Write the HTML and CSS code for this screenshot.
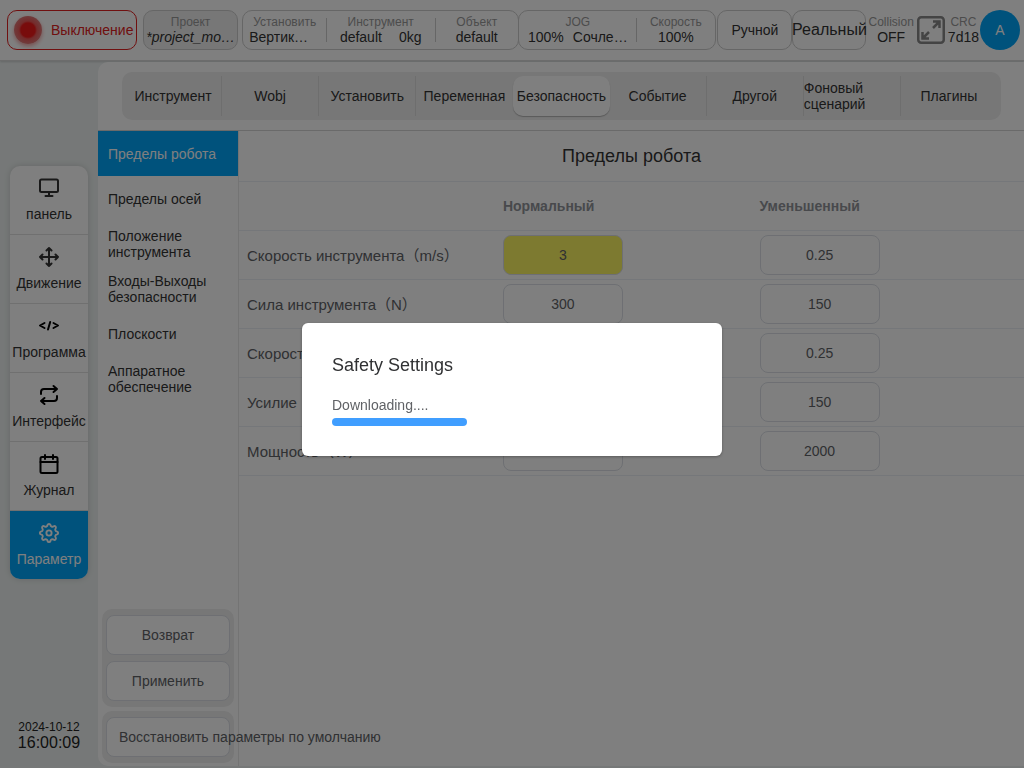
FILE: index.html
```html
<!DOCTYPE html>
<html lang="ru">
<head>
<meta charset="utf-8">
<meta name="viewport" content="width=device-width, initial-scale=1">
<title>Пределы робота</title>
<link rel="stylesheet" href="styles.css">
</head>
<body>
<div class="app">
  <header class="topbar">
    <button class="power" type="button"><span class="lamp"></span><span>Выключение</span></button>
    <div class="box project">
      <div class="stat"><span class="stat-label">Проект</span><span class="stat-value"><em>*project_mo…</em></span></div>
    </div>
    <div class="box group-tool">
      <div class="stat cell-mount"><span class="stat-label">Установить</span><span class="stat-value start">Вертик…</span></div>
      <div class="stat divided"><span class="stat-label">Инструмент</span><span class="stat-value wide"><span>default</span><span>0kg</span></span></div>
      <div class="stat divided"><span class="stat-label">Объект</span><span class="stat-value">default</span></div>
    </div>
    <div class="box group-jog">
      <div class="stat"><span class="stat-label">JOG</span><span class="stat-value pair"><span>100%</span><span>Сочле…</span></span></div>
      <div class="stat divided"><span class="stat-label">Скорость</span><span class="stat-value">100%</span></div>
    </div>
    <button class="box mode" type="button">Ручной</button>
    <button class="box mode real" type="button">Реальный</button>
    <div class="stat collision"><span class="stat-label">Collision</span><span class="stat-value">OFF</span></div>
    <button class="expand" type="button" aria-label="Fullscreen">
      <svg width="28" height="28" viewBox="0 0 28 28" fill="none" stroke="currentColor" stroke-width="2.500"><rect x="1.250" y="1.250" width="25.500" height="25.500" rx="3"/><path d="M16 5.500h6.500V12M22.500 5.500L16 12M5.500 16v6.500H12M5.500 22.500L12 16"/></svg>
    </button>
    <div class="stat crc"><span class="stat-label">CRC</span><span class="stat-value">7d18</span></div>
    <button class="avatar" type="button">A</button>
  </header>

  <div class="body">
    <aside class="rail">
      <nav class="nav">
        <a class="nav-item" href="#"><svg class="icon" viewBox="0 0 20 20"><rect x="1" y="1.500" width="18" height="12.500" rx="1.500"/><path d="M10 14v4M6.500 18h7"/></svg><span>панель</span></a>
        <a class="nav-item" href="#"><svg class="icon" viewBox="0 0 20 20"><path d="M10 1v18M1 10h18M7.500 3.500L10 1l2.500 2.500M7.500 16.500L10 19l2.500-2.500M3.500 7.500L1 10l2.500 2.500M16.500 7.500L19 10l-2.500 2.500"/></svg><span>Движение</span></a>
        <a class="nav-item" href="#"><svg class="icon dark" viewBox="0 0 20 20"><path d="M5.500 7L1 9.500 5.500 12M14.500 7L19 9.500 14.500 12M11.200 6l-2.200 7.500"/></svg><span>Программа</span></a>
        <a class="nav-item" href="#"><svg class="icon dark" viewBox="0 0 20 20"><path d="M14.500 1L18 4l-3.500 3M18 4H5a3 3 0 0 0-3 3v2M5.500 19L2 16l3.500-3M2 16h13a3 3 0 0 0 3-3v-2"/></svg><span>Интерфейс</span></a>
        <a class="nav-item" href="#"><svg class="icon dark" viewBox="0 0 20 20"><rect x="1.500" y="3" width="17" height="16" rx="1.500"/><path d="M1.500 8h17M6 1V5M14 1V5"/></svg><span>Журнал</span></a>
        <a class="nav-item active" href="#"><svg class="icon" viewBox="-10.700 -10.700 21.400 21.400"><path d="M8.670-1.530A1.600 1.600 0 0 1 8.670 1.530A2.100 2.100 0 0 0 7.210 5.050A1.600 1.600 0 0 1 5.050 7.210A2.100 2.100 0 0 0 1.530 8.670A1.600 1.600 0 0 1-1.530 8.670A2.100 2.100 0 0 0-5.050 7.210A1.600 1.600 0 0 1-7.210 5.050A2.100 2.100 0 0 0-8.670 1.530A1.600 1.600 0 0 1-8.670-1.530A2.100 2.100 0 0 0-7.210-5.050A1.600 1.600 0 0 1-5.050-7.210A2.100 2.100 0 0 0-1.530-8.670A1.600 1.600 0 0 1 1.530-8.670A2.100 2.100 0 0 0 5.050-7.210A1.600 1.600 0 0 1 7.210-5.050A2.100 2.100 0 0 0 8.670-1.530Z"/><circle r="2.800"/></svg><span>Параметр</span></a>
      </nav>
      <div class="clock"><span class="date">2024-10-12</span><span class="time">16:00:09</span></div>
    </aside>

    <main class="main">
      <div class="tabs-wrap">
        <nav class="tabs">
          <a class="tab" href="#">Инструмент</a>
          <a class="tab" href="#">Wobj</a>
          <a class="tab" href="#">Установить</a>
          <a class="tab" href="#">Переменная</a>
          <a class="tab active" href="#">Безопасность</a>
          <a class="tab" href="#">Событие</a>
          <a class="tab" href="#">Другой</a>
          <a class="tab" href="#">Фоновый сценарий</a>
          <a class="tab" href="#">Плагины</a>
        </nav>
      </div>
      <div class="content">
        <div class="side">
          <nav class="menu">
            <a class="menu-item active" href="#">Пределы робота</a>
            <a class="menu-item" href="#">Пределы осей</a>
            <a class="menu-item" href="#">Положение инструмента</a>
            <a class="menu-item" href="#">Входы-Выходы безопасности</a>
            <a class="menu-item" href="#">Плоскости</a>
            <a class="menu-item" href="#">Аппаратное обеспечение</a>
          </nav>
          <div class="actions">
            <div class="action-group">
              <button class="action" type="button">Возврат</button>
              <button class="action" type="button">Применить</button>
            </div>
            <div class="action-group">
              <button class="action long" type="button">Восстановить параметры по умолчанию</button>
            </div>
          </div>
        </div>
        <section class="panel">
          <h1 class="title">Пределы робота</h1>
          <table class="limits">
            <colgroup><col class="col-name"><col class="col-normal"><col></colgroup>
            <thead>
              <tr><td></td><th scope="col">Нормальный</th><th scope="col">Уменьшенный</th></tr>
            </thead>
            <tbody>
              <tr><th scope="row" id="r1">Скорость инструмента（m/s）</th><td><input class="changed" aria-labelledby="r1" value="3"></td><td><input aria-labelledby="r1" value="0.25"></td></tr>
              <tr><th scope="row" id="r2">Сила инструмента（N）</th><td><input aria-labelledby="r2" value="300"></td><td><input aria-labelledby="r2" value="150"></td></tr>
              <tr><th scope="row" id="r3">Скорость（m/s）</th><td><input aria-labelledby="r3" value="3"></td><td><input aria-labelledby="r3" value="0.25"></td></tr>
              <tr><th scope="row" id="r4">Усилие（N）</th><td><input aria-labelledby="r4" value="300"></td><td><input aria-labelledby="r4" value="150"></td></tr>
              <tr><th scope="row" id="r5">Мощность（W）</th><td><input aria-labelledby="r5" value="2000"></td><td><input aria-labelledby="r5" value="2000"></td></tr>
            </tbody>
          </table>
        </section>
      </div>
    </main>
  </div>
</div>

<div class="overlay">
  <div class="dialog" role="dialog" aria-modal="true" aria-labelledby="dialog-title">
    <h2 class="dialog-title" id="dialog-title">Safety Settings</h2>
    <p class="dialog-text">Downloading....</p>
    <div class="progress" role="progressbar" aria-label="Downloading" aria-valuemin="0" aria-valuemax="1000" aria-valuenow="375"><div class="progress-fill" style="width:37.5%"></div></div>
  </div>
</div>
</body>
</html>
```
FILE: styles.css
```css
* { box-sizing: border-box; }

body {
  margin: 0;
  font-family: "Liberation Sans", "Noto Sans CJK SC", Arial, sans-serif;
  font-size: 14px;
  line-height: 16px;
  color: #333;
  background: #ecf1f0;
}

a { color: inherit; text-decoration: none; }
button, input { font: inherit; color: inherit; }
button { padding: 0; cursor: pointer; }

.app {
  display: flex;
  flex-direction: column;
  min-height: 100vh;
}

/* Top bar */
.topbar {
  display: grid;
  grid-template-columns:
    minmax(0, 136fr) minmax(0, 99fr) minmax(0, 276fr) minmax(0, 199fr)
    minmax(0, 75fr) minmax(0, 76fr) auto auto auto auto;
  align-items: center;
  height: 61px;
  padding: 0 4px 1px 7px;
  background: #fff;
  border-bottom: 1px solid #d8d8d8;
  box-shadow: 0 1px 2px rgba(0, 0, 0, 0.15);
}

.power {
  display: flex;
  align-items: center;
  gap: 9px;
  height: 40px;
  padding-left: 6px;
  margin-right: 6px;
  color: #e02020;
  background: #fff;
  border: 1px solid #e02020;
  border-radius: 10px;
}

.lamp {
  flex: none;
  width: 28px;
  height: 28px;
  border-radius: 50%;
  background: radial-gradient(circle, #f01818 0 7px, #e85858 9px, #e07878 14px);
  box-shadow: 0 2px 4px #f0a0a0;
}

.box {
  display: grid;
  align-items: center;
  min-width: 0;
  height: 40px;
  background: #fff;
  border: 1px solid #ccc;
  border-radius: 10px;
}

.project { margin-right: 4px; background: #eee; }
.group-tool { grid-template-columns: 83fr 109fr 83fr; margin-right: -1px; }
.group-jog { grid-template-columns: 117fr 79fr; margin-right: 1px; }
.mode { justify-content: center; white-space: nowrap; }
.real { font-size: 16px; margin-right: 2px; }

.stat {
  display: flex;
  flex-direction: column;
  align-items: center;
  min-width: 0;
  white-space: nowrap;
}

.stat-label { font-size: 12px; line-height: 14px; color: #999; }
.stat-value { display: flex; line-height: 16px; }
.start { align-self: flex-start; }
.wide { gap: 17px; }
.pair { gap: 9px; }
.cell-mount { padding-left: 6px; padding-right: 6px; }
.divided { background: linear-gradient(#ccc, #ccc) left center / 1px 24px no-repeat; }
.collision { margin-right: 3px; }
.crc { margin: 0 1px 0 3px; }

.expand { display: flex; border: 0; background: none; color: #888; }

.avatar {
  width: 40px;
  height: 40px;
  border: 0;
  border-radius: 50%;
  color: #fff;
  background: #00a4f8;
}

/* Left rail */
.body { display: flex; flex: 1; padding: 1px 0 2px; }

.rail {
  display: flex;
  flex-direction: column;
  flex: none;
  width: 98px;
  padding: 104px 10px 14px;
}

.nav {
  overflow: hidden;
  background: #fff;
  border-radius: 10px;
  box-shadow: 0 0 6px rgba(0, 0, 0, 0.15);
}

.nav-item {
  display: flex;
  flex-direction: column;
  align-items: center;
  gap: 8px;
  height: 69px;
  padding-top: 12px;
  border-bottom: 1px solid #e0e0e0;
}

.nav-item.active {
  height: 68px;
  color: #fff;
  background: #00a4f8;
  border-bottom: 0;
}

.icon {
  flex: none;
  width: 20px;
  height: 20px;
  overflow: visible;
  fill: none;
  stroke: currentColor;
  stroke-width: 2;
  stroke-linecap: round;
  stroke-linejoin: round;
}

.dark { stroke: #000; }

.clock {
  display: flex;
  flex-direction: column;
  align-items: center;
  margin-top: auto;
  color: #222;
}

.date { font-size: 12px; line-height: 14px; }
.time { font-size: 16px; line-height: 18px; }

/* Main card */
.main {
  display: flex;
  flex-direction: column;
  flex: 1;
  min-width: 0;
  background: #fff;
  border-radius: 10px 0 0 10px;
}

.tabs-wrap { padding: 10px 23px 10px 24px; border-bottom: 1px solid #d4d4d4; }

.tabs {
  display: flex;
  height: 48px;
  padding: 4px 4px 4px 3px;
  background: #eee;
  border-radius: 10px;
}

.tab {
  display: flex;
  align-items: center;
  justify-content: center;
  flex: 1 1 0;
  min-width: 0;
  border-right: 1px solid #ddd;
}

.tab.active, .tab:last-child { border-right: 0; }
.tab:nth-child(4) { border-right-color: transparent; }

.tab.active {
  background: #fff;
  border-radius: 10px;
  box-shadow: 0 1px 1px rgba(0, 0, 0, 0.25);
}

.content { display: flex; flex: 1; }

.side {
  display: flex;
  flex-direction: column;
  justify-content: space-between;
  flex: none;
  width: 141px;
  border-right: 1px solid #e8e8e8;
}

.menu-item {
  display: flex;
  align-items: center;
  height: 45px;
  padding: 0 10px;
}

.menu-item.active { color: #fff; background: #00a4f8; }

.actions {
  display: flex;
  flex-direction: column;
  gap: 4px;
  padding: 0 4px 3px;
}

.action-group {
  display: flex;
  flex-direction: column;
  gap: 6px;
  padding: 6px 4px;
  background: #eee;
  border-radius: 10px;
}

.action {
  height: 40px;
  color: #606266;
  background: #fff;
  border: 1px solid #dcdfe6;
  border-radius: 8px;
  white-space: nowrap;
}

.long { padding-left: 12px; text-align: left; }

/* Limits table */
.panel { flex: 1; min-width: 0; }

.title {
  margin: 0;
  padding: 15px 0;
  font-size: 18px;
  font-weight: 400;
  line-height: 20px;
  text-align: center;
  border-bottom: 1px solid #ebeef5;
}

.limits {
  width: 100%;
  table-layout: fixed;
  border-collapse: separate;
  border-spacing: 0;
  color: #606266;
}

.col-name { width: 32.6%; }
.col-normal { width: 32.7%; }

.limits th, .limits td {
  height: 49px;
  padding: 0 8px;
  text-align: left;
  border-bottom: 1px solid #ebeef5;
}

.limits thead th { color: #909399; }
.limits tbody th { padding-top: 2px; font-size: 15px; font-weight: 400; }

.limits input {
  display: block;
  width: 120px;
  height: 40px;
  padding: 0 10px;
  text-align: center;
  background: #fff;
  border: 1px solid #dcdfe6;
  border-radius: 8px;
}

.limits .changed { background: #faf560; }

/* Modal */
.overlay {
  position: fixed;
  inset: 0;
  display: flex;
  align-items: center;
  justify-content: center;
  padding-top: 11px;
  background: rgba(0, 0, 0, 0.5);
}

.dialog {
  width: 420px;
  max-width: 90%;
  padding: 30px;
  background: #fff;
  border-radius: 6px;
  box-shadow: 0 1px 3px rgba(0, 0, 0, 0.3);
}

.dialog-title {
  margin: 0 0 20px;
  font-size: 18px;
  font-weight: 400;
  line-height: 24px;
  color: #303133;
}

.dialog-text { margin: 0; line-height: 16px; color: #606266; }
.progress { height: 8px; margin-top: 5px; }
.progress-fill { height: 100%; background: #409eff; border-radius: 4px; }
```
